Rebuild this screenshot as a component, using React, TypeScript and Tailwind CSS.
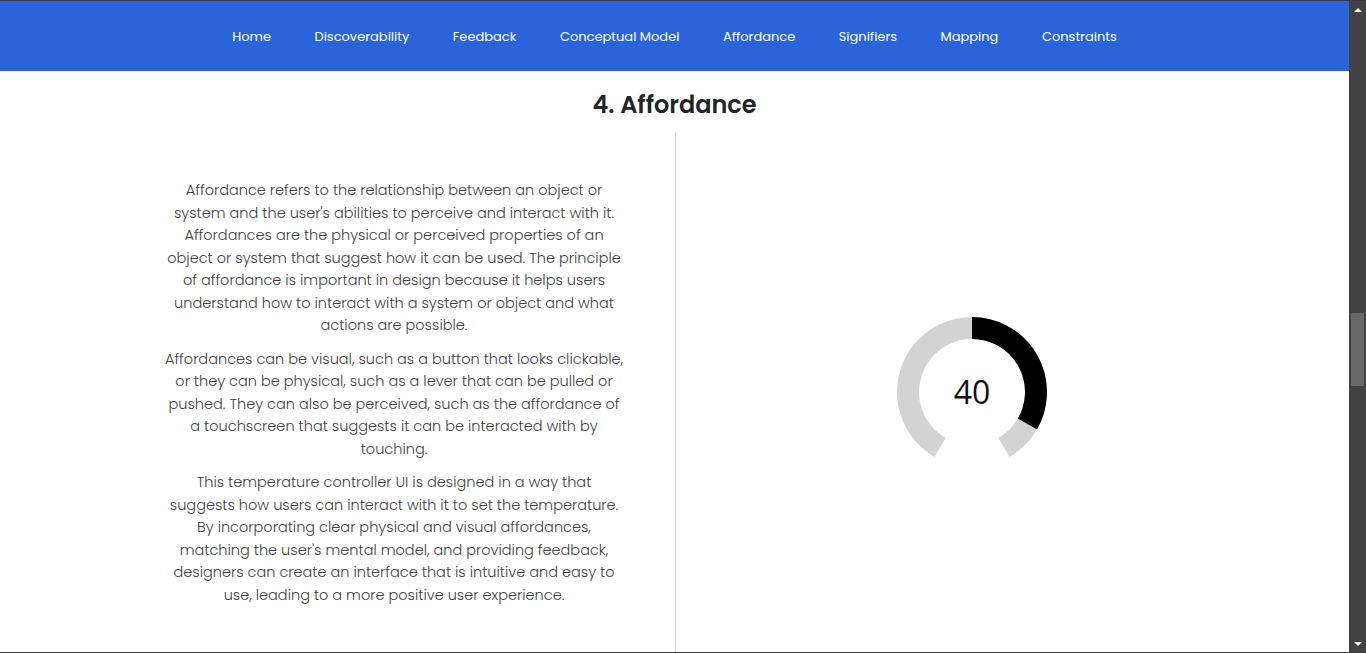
import React from 'react';

const navItems = [
  'Home',
  'Discoverability',
  'Feedback',
  'Conceptual Model',
  'Affordance',
  'Signifiers',
  'Mapping',
  'Constraints',
];

function polar(deg: number, r: number) {
  const a = (deg * Math.PI) / 180;
  return [75 + r * Math.sin(a), 75 - r * Math.cos(a)];
}

function arc(from: number, to: number, r: number) {
  const [x1, y1] = polar(from, r);
  const [x2, y2] = polar(to, r);
  const large = to - from > 180 ? 1 : 0;
  return `M ${x1} ${y1} A ${r} ${r} 0 ${large} 1 ${x2} ${y2}`;
}

function Gauge({ value }: { value: number }) {
  return (
    <div className="relative w-[150px] h-[150px]">
      <svg width="150" height="150" viewBox="0 0 150 150">
        <path d={arc(-150, 150, 64)} fill="none" stroke="#d3d3d3" strokeWidth="22" />
        <path d={arc(0, 120, 64)} fill="none" stroke="#000" strokeWidth="22" />
      </svg>
      <div className="absolute inset-0 flex items-center justify-center text-[32px] font-normal text-[#111] font-['Open_Sans',sans-serif]">
        {value}
      </div>
    </div>
  );
}

export default function App() {
  return (
    <div className="h-[653px] w-full flex flex-col border-t border-b border-[#3a3a3a] bg-white overflow-hidden font-['Poppins','Open_Sans',sans-serif]">
      <div className="flex flex-1 min-h-0">
        <main className="flex-1 min-w-0 flex flex-col">
          {/* Nav */}
          <nav className="h-[70px] shrink-0 bg-[#2b64d8] flex items-center justify-center gap-[43.5px] text-white text-[13px] font-normal pt-[2px]">
            {navItems.map((item) => (
              <a key={item} href="#" className="whitespace-nowrap">
                {item}
              </a>
            ))}
          </nav>

          {/* Title */}
          <h2 className="text-center text-[24px] font-semibold text-[#212529] pt-[19px] pb-[13px] leading-[29px]">
            4. Affordance
          </h2>

          {/* Columns */}
          <div className="w-[1140px] mx-auto grid grid-cols-2 flex-1">
            <div className="flex justify-center pl-[9px] pt-[47px] pb-[43px]">
              <div className="w-[462px] text-center text-[14.5px] font-light leading-[22.5px] text-[#3f3f3f] flex flex-col gap-[11px]">
                <p>
                  Affordance refers to the relationship between an object or system and the user's abilities to
                  perceive and interact with it. Affordances are the physical or perceived properties of an object or
                  system that suggest how it can be used. The principle of affordance is important in design because
                  it helps users understand how to interact with a system or object and what actions are possible.
                </p>
                <p>
                  Affordances can be visual, such as a button that looks clickable, or they can be physical, such as a
                  lever that can be pulled or pushed. They can also be perceived, such as the affordance of a
                  touchscreen that suggests it can be interacted with by touching.
                </p>
                <p>
                  This temperature controller UI is designed in a way that suggests how users can interact with it to
                  set the temperature. By incorporating clear physical and visual affordances, matching the user's
                  mental model, and providing feedback, designers can create an interface that is intuitive and easy
                  to use, leading to a more positive user experience.
                </p>
              </div>
            </div>
            <div className="border-l border-[#d6d6d6] flex items-center justify-center pl-[24px]">
              <Gauge value={40} />
            </div>
          </div>
        </main>

        {/* Scrollbar */}
        <div className="w-[17px] shrink-0 bg-[#424242] flex flex-col items-center">
          <div className="h-[17px] flex items-center justify-center">
            <div className="w-0 h-0 border-l-[4px] border-r-[4px] border-b-[4px] border-l-transparent border-r-transparent border-b-white" />
          </div>
          <div className="flex-1 w-full px-[2px]">
            <div className="mt-[295px] h-[73px] bg-[#686868]" />
          </div>
          <div className="h-[17px] flex items-center justify-center">
            <div className="w-0 h-0 border-l-[4px] border-r-[4px] border-t-[4px] border-l-transparent border-r-transparent border-t-white" />
          </div>
        </div>
      </div>
    </div>
  );
}
